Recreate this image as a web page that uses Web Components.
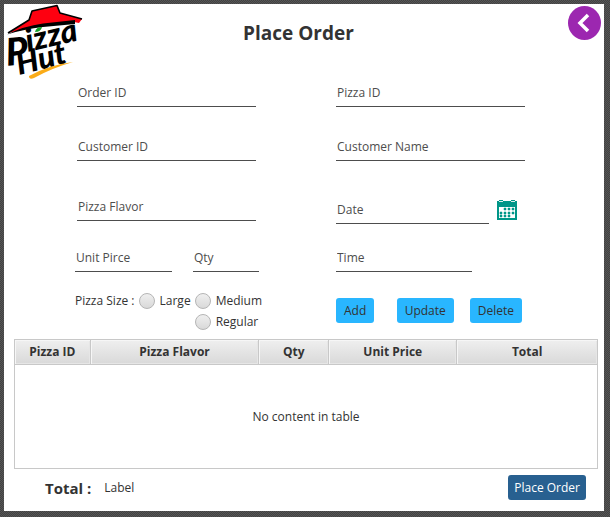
<!DOCTYPE html>
<html lang="en">
<head>
<meta charset="utf-8">
<title>Place Order</title>
<style>
  html, body { height: 100%; }
  body { margin: 0; font: 12px/16px "Open Sans", "Noto Sans", sans-serif; color: #333; }
</style>
</head>
<body>
<order-window></order-window>

<script>
const define = (name, html, setup) => {
  const template = document.createElement('template');
  template.innerHTML = html;
  customElements.define(name, class extends HTMLElement {
    constructor() {
      super();
      this.attachShadow({ mode: 'open' }).append(template.content.cloneNode(true));
    }
    connectedCallback() { if (setup) setup(this, this.shadowRoot); }
  });
};

define('brand-logo', `
  <style>
    :host { display: block; width: 80px; }
    svg { display: block; width: 100%; overflow: visible; }
    text { font-family: Lato, "Open Sans", sans-serif; font-style: italic; font-weight: 900; fill: #000; }
  </style>
  <svg viewBox="4 4 80 77" role="img" aria-label="Pizza Hut">
    <path d="M8 33 L29 20 L32 11 L57 5.500 L60 13 L82 19 L79 23 L74 22 L41 26 Z" fill="#fe0010"/>
    <path d="M8 33 L29 20 L32 11 L57 5.500 L60 13 L82 19" fill="none" stroke="#000" stroke-width="1.600" stroke-linejoin="round"/>
    <path d="M7 34.500 Q24 26 43 23.500 L75 20 L75 24 L43 27 Q24 29 7 34.500Z" fill="#000"/>
    <text transform="translate(7 66) rotate(-6)" font-size="38">P</text>
    <text transform="translate(28 52) rotate(-13)" font-size="32">izza</text>
    <text transform="translate(19 75) rotate(-14)" font-size="31">Hut</text>
    <path d="M35 32 Q36 27 42 27 Q41 32 35 32Z" fill="#14a028"/>
    <path d="M29 76 Q49 65 73 62 Q52 68 34 78 Q29 80 29 76Z" fill="#fbac18"/>
  </svg>`);

define('back-button', `
  <style>
    :host { display: block; }
    button { display: block; width: 33px; height: 34px; padding: 0; border: 0; border-radius: 50%; background: #9c27b0; cursor: pointer; }
    svg { display: block; width: 33px; height: 34px; }
  </style>
  <button type="button" aria-label="Back">
    <svg viewBox="0 0 33 34"><path d="M20 9 L12 17 L20 25" fill="none" stroke="#fff" stroke-width="3.500"/></svg>
  </button>`);

define('text-field', `
  <style>
    :host { display: block; min-width: 0; }
    input { display: block; box-sizing: border-box; width: 100%; height: 26px; padding: 0 1px 3px; border: 0; border-bottom: 1px solid #4d4d4d; border-radius: 0; background: none; font: inherit; color: #333; outline: 0; }
    input::placeholder { color: #4d4d4d; opacity: 1; }
  </style>
  <input type="text">`, (host, root) => {
  const input = root.querySelector('input');
  input.placeholder = host.getAttribute('label');
  input.setAttribute('aria-label', host.getAttribute('label'));
});

define('calendar-button', `
  <style>
    :host { display: block; }
    button { display: block; padding: 0; border: 0; background: none; cursor: pointer; }
    svg { display: block; width: 20px; height: 20px; }
  </style>
  <button type="button" aria-label="Choose date">
    <svg viewBox="0 0 20 20" fill="#009688" shape-rendering="crispEdges">
      <path d="M0 1H20V20H0Z"/>
      <path d="M2 1H6V2H2ZM14 1H18V2H14Z" fill="#d9efed"/>
      <path d="M2 0H6V1H2ZM14 0H18V1H14Z"/>
      <path d="M2 7H18V18H2Z" fill="#fff"/>
      <path d="M7 8H9V10H7ZM11 8H13V10H11ZM15 8H17V10H15ZM3 12H5V14H3ZM7 12H9V14H7ZM11 12H13V14H11ZM15 12H17V14H15ZM3 15H5V17H3ZM7 15H9V17H7ZM11 15H13V17H11Z" stroke="#009688" stroke-width=".5" shape-rendering="auto"/>
    </svg>
  </button>`);

define('action-button', `
  <style>
    :host { display: block; }
    button { display: block; height: 25px; padding: 0 var(--button-inset, 8px); border: 0; border-radius: 3px; background: var(--button-fill, #29b6ff); color: var(--button-text, #333); font: inherit; white-space: nowrap; cursor: pointer; }
  </style>
  <button type="button"><slot></slot></button>`);

define('size-picker', `
  <style>
    :host { display: block; }
    fieldset { display: grid; grid-template-columns: auto auto auto; justify-content: start; gap: 5px 4px; margin: 0; padding: 0; border: 0; white-space: nowrap; }
    label { display: flex; align-items: center; gap: 5px; }
    .last { grid-column: 3; }
    input { appearance: none; box-sizing: border-box; width: 16px; height: 16px; margin: 0; border: 1px solid #b5b5b5; border-radius: 50%; background: linear-gradient(#efefef, #d9d9d9); }
    input:checked { background: radial-gradient(#333 0 3px, #e4e4e4 4px); }
  </style>
  <fieldset aria-label="Pizza Size">
    <span>Pizza Size :</span>
    <label><input type="radio" name="size">Large</label>
    <label><input type="radio" name="size">Medium</label>
    <label class="last"><input type="radio" name="size">Regular</label>
  </fieldset>`);

define('order-table', `
  <style>
    :host { display: flex; }
    table { flex: 1; table-layout: fixed; width: 100%; border: 1px solid #c8c8c8; border-spacing: 0; }
    th { box-sizing: border-box; height: 25px; padding: 0; border-right: 1px solid #c8c8c8; border-bottom: 1px solid #c8c8c8; background: linear-gradient(#efefef, #d9d9d9); box-shadow: inset 1px 1px #f6f6f6, inset -1px -1px #e6e6e6; font-weight: 700; }
    th:last-child { border-right: 0; }
    td { padding: 0; text-align: center; }
  </style>
  <table>
    <colgroup><col style="width:13%"><col style="width:29%"><col style="width:12%"><col style="width:22%"><col></colgroup>
    <thead><tr><th>Pizza ID</th><th>Pizza Flavor</th><th>Qty</th><th>Unit Price</th><th>Total</th></tr></thead>
    <tbody><tr><td colspan="5">No content in table</td></tr></tbody>
  </table>`);

define('order-window', `
  <style>
    :host { display: flex; box-sizing: border-box; min-height: 100%; padding: 4px 6px 6px 4px; background: repeating-conic-gradient(#424242 0 25%, #565656 0 50%) 0 0 / 2px 2px; }
    main { flex: 1; display: flex; flex-direction: column; background: #fff; }
    header { display: grid; grid-template-columns: 1fr auto 1fr; align-items: start; padding: 0 3px 0 0; }
    h1 { margin: 0; padding: 16px 8px 0 0; font-size: 19px; line-height: 26px; font-weight: 700; }
    back-button { justify-self: end; padding-top: 2px; }
    .form { display: grid; grid-template-columns: 184fr 189fr; column-gap: 77px; padding: 0 79px 0 71px; }
    .column { display: flex; flex-direction: column; min-width: 0; }
    .column > * + * { margin-top: 28px; }
    .full { padding: 0 3px 0 2px; }
    .column > .wide-gap { margin-top: 34px; }
    .column > .date { margin-top: 37px; }
    .pair { display: grid; grid-template-columns: 97fr 66fr; gap: 21px; }
    .column > .pair { margin-top: 25px; }
    .column > size-picker { margin-top: 21px; }
    .date { display: flex; gap: 8px; }
    .date text-field { flex: 0 1 153px; }
    .date calendar-button { padding-top: 2px; }
    .column > .time { width: 72%; margin-top: 22px; }
    .column > .actions { margin-top: 26px; }
    .actions { display: flex; gap: 16px; padding-right: 3px; }
    .actions action-button:first-child { margin-right: auto; }
    order-table { flex: 1; margin: 9px 6px 0 10px; }
    footer { display: flex; align-items: center; gap: 13px; padding: 6px 18px 11px 41px; }
    strong { font-size: 15px; line-height: 20px; }
    footer action-button { margin-left: auto; --button-inset: 6px; --button-fill: #286090; --button-text: #fff; }
  </style>
  <main>
    <header>
      <brand-logo></brand-logo>
      <h1>Place Order</h1>
      <back-button></back-button>
    </header>
    <div class="form">
      <div class="column">
        <text-field class="full" label="Order ID"></text-field>
        <text-field class="full" label="Customer ID"></text-field>
        <text-field class="full wide-gap" label="Pizza Flavor"></text-field>
        <div class="pair">
          <text-field label="Unit Pirce"></text-field>
          <text-field label="Qty"></text-field>
        </div>
        <size-picker></size-picker>
      </div>
      <div class="column">
        <text-field label="Pizza ID"></text-field>
        <text-field label="Customer Name"></text-field>
        <div class="date">
          <text-field label="Date"></text-field>
          <calendar-button></calendar-button>
        </div>
        <text-field class="time" label="Time"></text-field>
        <div class="actions">
          <action-button>Add</action-button>
          <action-button>Update</action-button>
          <action-button>Delete</action-button>
        </div>
      </div>
    </div>
    <order-table></order-table>
    <footer>
      <strong>Total :</strong>
      <span>Label</span>
      <action-button>Place Order</action-button>
    </footer>
  </main>`);
</script>
</body>
</html>
